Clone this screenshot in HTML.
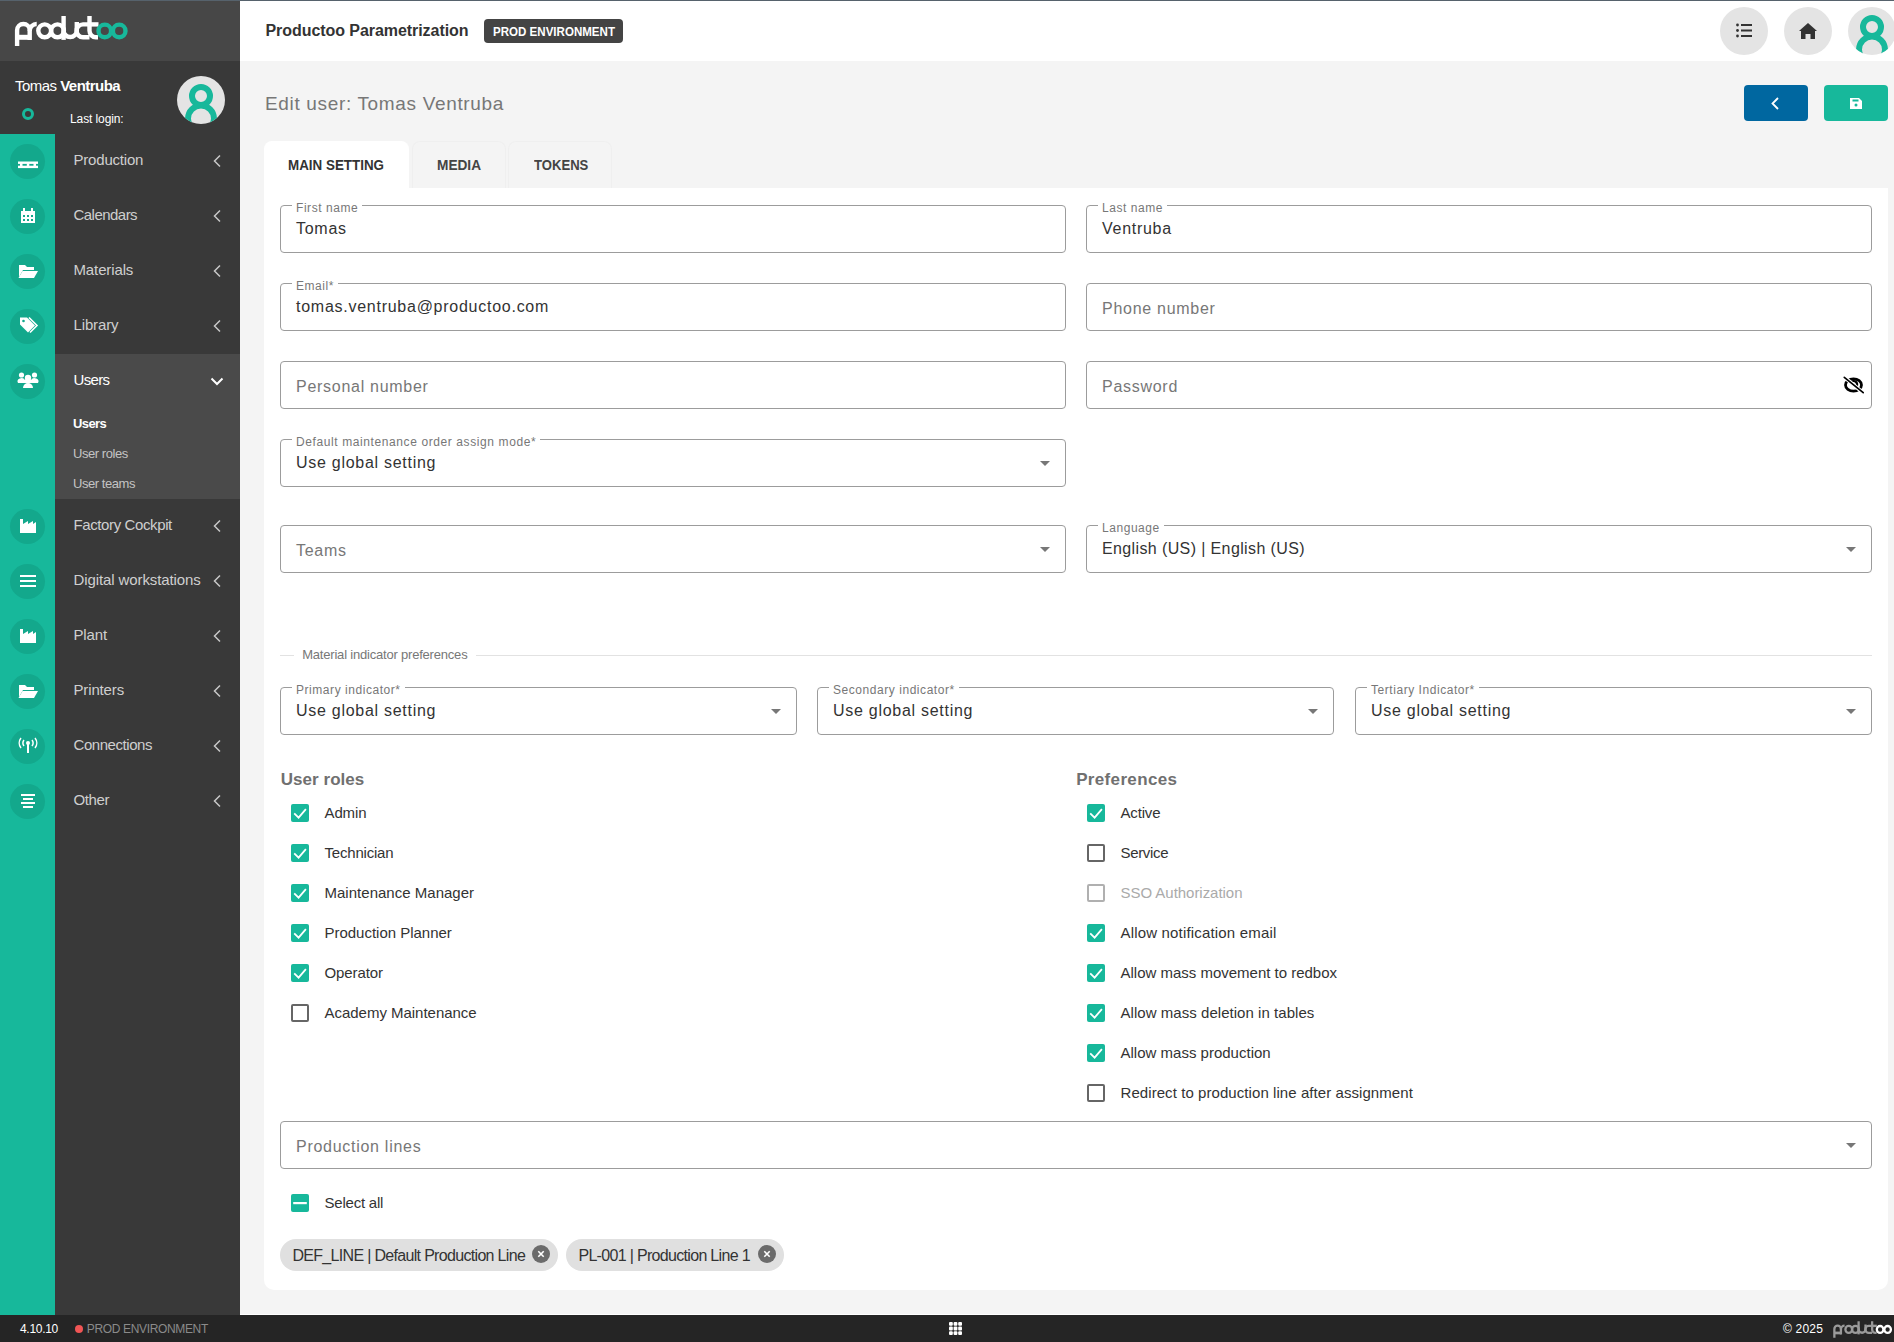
<!DOCTYPE html>
<html><head><meta charset="utf-8">
<style>
*{box-sizing:border-box;margin:0;padding:0}
html,body{width:1894px;height:1342px;overflow:hidden;background:#f4f4f4;font-family:"Liberation Sans",sans-serif;position:relative}
.a{position:absolute}
.t{position:absolute;white-space:nowrap;line-height:1}
svg{position:absolute;overflow:visible}
</style></head><body>
<div class="a" style="left:0;top:0;width:1894px;height:1px;background:#56626c"></div>
<div class="a" style="left:0;top:1px;width:240px;height:60px;background:#474747"></div>
<div class="a" style="left:0;top:61px;width:240px;height:1254px;background:#393939"></div>
<div class="a" style="left:0;top:134px;width:55px;height:1181px;background:#17b89b"></div>
<div class="a" style="left:55px;top:354px;width:185px;height:145px;background:#4a4a4a"></div>
<div class="a" style="left:240px;top:1px;width:1654px;height:60px;background:#fff"></div>
<div class="a" style="left:240px;top:1314px;width:1654px;height:1px;background:#fff"></div>
<div class="a" style="left:0;top:1315px;width:1894px;height:27px;background:#252525"></div>
<svg style="left:0;top:0" width="140" height="60" viewBox="0 0 140 60">
<g fill="none" stroke="#fff" stroke-width="4.4"><path d="M17.1 46 V30.3 A6.3 6.3 0 0 1 29.7 30.3 V39.9"/>
<path d="M17.1 37.3 H29.7" stroke-width="5"/>
<path d="M29.7 31 A7 7 0 0 1 36.7 24"/>
<circle cx="44.7" cy="30.8" r="6.4"/>
<circle cx="57.5" cy="30.8" r="6.4"/>
<path d="M63.6 16 V39.9"/>
<path d="M63.6 30.45 A6.6 6.6 0 0 0 76.8 30.45 V22"/>
<path d="M89.5 24.4 H83 A6.4 6.4 0 0 0 83 37.2 H89.5"/>
<path d="M89.5 16 V30.8 A6.4 6.4 0 0 0 95.9 37.2 H98"/>
<path d="M89.5 24.4 H98.5"/></g>
<g fill="none" stroke="#17b89b" stroke-width="4.4"><circle cx="104.8" cy="30.9" r="6.3"/>
<circle cx="119.2" cy="30.9" r="6.3"/></g></svg>
<div class="t" style="left:15px;top:78px;font-size:15px;color:#fff;letter-spacing:-0.53px">Tomas <b>Ventruba</b></div>
<div class="t" style="left:70px;top:113.00px;font-size:12px;color:#fff;font-weight:400;letter-spacing:-0.1px;">Last login:</div>
<div class="a" style="left:22px;top:108px;width:12px;height:12px;border-radius:50%;border:3.2px solid #17b89b"></div>
<svg style="left:177px;top:76px" width="48" height="48" viewBox="0 0 48 48">
<defs><clipPath id="cp177"><circle cx="24" cy="24" r="24"/></clipPath></defs>
<circle cx="24" cy="24" r="24" fill="#e4e4e4"/>
<g clip-path="url(#cp177)" fill="none" stroke="#17b89b">
<circle cx="24" cy="20" r="9" stroke-width="6"/>
<circle cx="24" cy="42.5" r="13" stroke-width="6"/>
</g></svg>
<div class="a" style="left:10px;top:143.5px;width:35px;height:35px;border-radius:50%;background:#13a88c"></div>
<svg style="left:27.5px;top:161px" width="1" height="1"><g transform="translate(0,1.5)"><rect x="-10" y="-1" width="20" height="2.4" fill="#fff"/><rect x="-10" y="3.2" width="20" height="2.4" fill="#fff"/><rect x="-8" y="0" width="2.5" height="4" fill="#fff"/><rect x="-1.2" y="0" width="2.5" height="4" fill="#fff"/><rect x="5.5" y="0" width="2.5" height="4" fill="#fff"/></g></svg>
<div class="t" style="left:73.5px;top:152.00px;font-size:15px;color:#cfcfcf;font-weight:400;letter-spacing:-0.2px;">Production</div>
<svg style="left:0;top:0" width="1" height="1"><path d="M220 155.5 L214.5 161 L220 166.5" fill="none" stroke="#c8c8c8" stroke-width="1.5"/></svg>
<div class="a" style="left:10px;top:198.5px;width:35px;height:35px;border-radius:50%;background:#13a88c"></div>
<svg style="left:27.5px;top:216px" width="1" height="1"><rect x="-7" y="-5" width="14" height="12" fill="#fff"/><rect x="-5" y="-8" width="2" height="4" fill="#fff"/><rect x="3" y="-8" width="2" height="4" fill="#fff"/><g fill="#13a88c"><rect x="-5" y="-1" width="2" height="2"/><rect x="-1" y="-1" width="2" height="2"/><rect x="3" y="-1" width="2" height="2"/><rect x="-5" y="3" width="2" height="2"/><rect x="-1" y="3" width="2" height="2"/><rect x="3" y="3" width="2" height="2"/></g></svg>
<div class="t" style="left:73.5px;top:207.00px;font-size:15px;color:#cfcfcf;font-weight:400;letter-spacing:-0.533px;">Calendars</div>
<svg style="left:0;top:0" width="1" height="1"><path d="M220 210.5 L214.5 216 L220 221.5" fill="none" stroke="#c8c8c8" stroke-width="1.5"/></svg>
<div class="a" style="left:10px;top:253.5px;width:35px;height:35px;border-radius:50%;background:#13a88c"></div>
<svg style="left:27.5px;top:271px" width="1" height="1"><path d="M-9 -6 H-3 L-1 -4 H6 V-1 H-5 L-9 6 Z" fill="#fff"/><path d="M-5.5 0 H10 L6 7 H-9.5 Z" fill="#fff"/></svg>
<div class="t" style="left:73.5px;top:262.00px;font-size:15px;color:#cfcfcf;font-weight:400;letter-spacing:-0.122px;">Materials</div>
<svg style="left:0;top:0" width="1" height="1"><path d="M220 265.5 L214.5 271 L220 276.5" fill="none" stroke="#c8c8c8" stroke-width="1.5"/></svg>
<div class="a" style="left:10px;top:308.5px;width:35px;height:35px;border-radius:50%;background:#13a88c"></div>
<svg style="left:27.5px;top:326px" width="1" height="1"><g transform="translate(0,-1.5)"><path d="M-8 -7 H-1 L7 1 L0 8 L-8 0 Z" fill="#fff"/><circle cx="-4.5" cy="-3.5" r="1.3" fill="#13a88c"/><path d="M1 -7 L9 1 L2 8" fill="none" stroke="#fff" stroke-width="1.6"/></g></svg>
<div class="t" style="left:73.5px;top:317.00px;font-size:15px;color:#cfcfcf;font-weight:400;letter-spacing:-0.143px;">Library</div>
<svg style="left:0;top:0" width="1" height="1"><path d="M220 320.5 L214.5 326 L220 331.5" fill="none" stroke="#c8c8c8" stroke-width="1.5"/></svg>
<div class="a" style="left:10px;top:363.5px;width:35px;height:35px;border-radius:50%;background:#13a88c"></div>
<svg style="left:27.5px;top:381px" width="1" height="1"><circle cx="-6.5" cy="-6" r="2.6" fill="#fff"/><circle cx="6.5" cy="-6" r="2.6" fill="#fff"/><circle cx="0" cy="-3" r="3.2" fill="#fff"/><path d="M-10 2 a3.5 3 0 0 1 7 -3 H3 a3.5 3 0 0 1 7 3 Z" fill="#fff"/><path d="M-5 7 a5 5 0 0 1 10 0 Z" fill="#fff"/></svg>
<div class="t" style="left:73.5px;top:372.00px;font-size:15px;color:#fff;font-weight:400;letter-spacing:-0.64px;">Users</div>
<svg style="left:0;top:0" width="1" height="1"><path d="M211.5 378.5 L217 384 L222.5 378.5" fill="none" stroke="#fff" stroke-width="2"/></svg>
<div class="a" style="left:10px;top:508.5px;width:35px;height:35px;border-radius:50%;background:#13a88c"></div>
<svg style="left:27.5px;top:526px" width="1" height="1"><path d="M-8 -7 H-5 V-2 L0 -5 V-2 L5 -5 V-2 L8 -4 V7 H-8 Z" fill="#fff"/></svg>
<div class="t" style="left:73.5px;top:517.00px;font-size:15px;color:#cfcfcf;font-weight:400;letter-spacing:-0.387px;">Factory Cockpit</div>
<svg style="left:0;top:0" width="1" height="1"><path d="M220 520.5 L214.5 526 L220 531.5" fill="none" stroke="#c8c8c8" stroke-width="1.5"/></svg>
<div class="a" style="left:10px;top:563.5px;width:35px;height:35px;border-radius:50%;background:#13a88c"></div>
<svg style="left:27.5px;top:581px" width="1" height="1"><rect x="-8" y="-6" width="16" height="2" fill="#fff"/><rect x="-8" y="-1" width="16" height="2" fill="#fff"/><rect x="-8" y="4" width="16" height="2" fill="#fff"/></svg>
<div class="t" style="left:73.5px;top:572.00px;font-size:15px;color:#cfcfcf;font-weight:400;letter-spacing:-0.1px;">Digital workstations</div>
<svg style="left:0;top:0" width="1" height="1"><path d="M220 575.5 L214.5 581 L220 586.5" fill="none" stroke="#c8c8c8" stroke-width="1.5"/></svg>
<div class="a" style="left:10px;top:618.5px;width:35px;height:35px;border-radius:50%;background:#13a88c"></div>
<svg style="left:27.5px;top:636px" width="1" height="1"><path d="M-8 -7 H-5 V-2 L0 -5 V-2 L5 -5 V-2 L8 -4 V7 H-8 Z" fill="#fff"/></svg>
<div class="t" style="left:73.5px;top:627.00px;font-size:15px;color:#cfcfcf;font-weight:400;letter-spacing:-0.16px;">Plant</div>
<svg style="left:0;top:0" width="1" height="1"><path d="M220 630.5 L214.5 636 L220 641.5" fill="none" stroke="#c8c8c8" stroke-width="1.5"/></svg>
<div class="a" style="left:10px;top:673.5px;width:35px;height:35px;border-radius:50%;background:#13a88c"></div>
<svg style="left:27.5px;top:691px" width="1" height="1"><path d="M-9 -6 H-3 L-1 -4 H6 V-1 H-5 L-9 6 Z" fill="#fff"/><path d="M-5.5 0 H10 L6 7 H-9.5 Z" fill="#fff"/></svg>
<div class="t" style="left:73.5px;top:682.00px;font-size:15px;color:#cfcfcf;font-weight:400;letter-spacing:-0.15px;">Printers</div>
<svg style="left:0;top:0" width="1" height="1"><path d="M220 685.5 L214.5 691 L220 696.5" fill="none" stroke="#c8c8c8" stroke-width="1.5"/></svg>
<div class="a" style="left:10px;top:728.5px;width:35px;height:35px;border-radius:50%;background:#13a88c"></div>
<svg style="left:27.5px;top:746px" width="1" height="1"><rect x="-1" y="-3" width="2" height="10" fill="#fff"/><circle cx="0" cy="-3" r="2" fill="#fff"/><path d="M-4 -6 a5 5 0 0 0 0 6 M4 -6 a5 5 0 0 1 0 6 M-7 -8 a8 8 0 0 0 0 10 M7 -8 a8 8 0 0 1 0 10" fill="none" stroke="#fff" stroke-width="1.5"/></svg>
<div class="t" style="left:73.5px;top:737.00px;font-size:15px;color:#cfcfcf;font-weight:400;letter-spacing:-0.436px;">Connections</div>
<svg style="left:0;top:0" width="1" height="1"><path d="M220 740.5 L214.5 746 L220 751.5" fill="none" stroke="#c8c8c8" stroke-width="1.5"/></svg>
<div class="a" style="left:10px;top:783.5px;width:35px;height:35px;border-radius:50%;background:#13a88c"></div>
<svg style="left:27.5px;top:801px" width="1" height="1"><rect x="-7" y="-7" width="14" height="2" fill="#fff"/><rect x="-5" y="-3" width="10" height="2" fill="#fff"/><rect x="-7" y="1" width="14" height="2" fill="#fff"/><rect x="-5" y="5" width="10" height="2" fill="#fff"/></svg>
<div class="t" style="left:73.5px;top:792.00px;font-size:15px;color:#cfcfcf;font-weight:400;letter-spacing:-0.36px;">Other</div>
<svg style="left:0;top:0" width="1" height="1"><path d="M220 795.5 L214.5 801 L220 806.5" fill="none" stroke="#c8c8c8" stroke-width="1.5"/></svg>
<div class="t" style="left:73px;top:417.00px;font-size:13px;color:#fff;font-weight:700;letter-spacing:-0.6px;">Users</div>
<div class="t" style="left:73px;top:447.00px;font-size:13px;color:#c4c4c4;font-weight:400;letter-spacing:-0.44px;">User roles</div>
<div class="t" style="left:73px;top:477.00px;font-size:13px;color:#c4c4c4;font-weight:400;letter-spacing:-0.44px;">User teams</div>
<div class="t" style="left:265.5px;top:23.00px;font-size:16px;color:#333;font-weight:700;letter-spacing:-0.06px;">Productoo Parametrization</div>
<div class="a" style="left:484px;top:19px;width:139px;height:24px;border-radius:4px;background:#444"></div>
<div class="t" style="left:492.6px;top:26.00px;font-size:12px;color:#fff;font-weight:700;letter-spacing:0px;transform:scaleX(0.963);transform-origin:0 0">PROD ENVIRONMENT</div>
<div class="a" style="left:1720px;top:7px;width:48px;height:48px;border-radius:50%;background:#e4e4e4"></div>
<div class="a" style="left:1784px;top:7px;width:48px;height:48px;border-radius:50%;background:#e4e4e4"></div>
<svg style="left:0;top:0" width="1" height="1"><g fill="#333">
<circle cx="1737.5" cy="25" r="1.4"/><circle cx="1737.5" cy="30.5" r="1.4"/><circle cx="1737.5" cy="36" r="1.4"/>
<rect x="1741" y="24" width="11" height="2"/><rect x="1741" y="29.5" width="11" height="2"/><rect x="1741" y="35" width="11" height="2"/>
<path d="M1799 31 L1808 23 L1817 31 L1815 31 V39 H1810.5 V34 H1805.5 V39 H1801 V31 Z"/>
</g></svg>
<svg style="left:1848px;top:7px" width="48" height="48" viewBox="0 0 48 48">
<defs><clipPath id="cp1848"><circle cx="24" cy="24" r="24"/></clipPath></defs>
<circle cx="24" cy="24" r="24" fill="#e4e4e4"/>
<g clip-path="url(#cp1848)" fill="none" stroke="#17b89b">
<circle cx="24" cy="20" r="9" stroke-width="6"/>
<circle cx="24" cy="42.5" r="13" stroke-width="6"/>
</g></svg>
<div class="t" style="left:265px;top:94.00px;font-size:19px;color:#777;font-weight:400;letter-spacing:0.66px;">Edit user: Tomas Ventruba</div>
<div class="a" style="left:1744px;top:85px;width:64px;height:36px;border-radius:4px;background:#0067a0"></div>
<div class="a" style="left:1824px;top:85px;width:64px;height:36px;border-radius:4px;background:#17b89b"></div>
<svg style="left:0;top:0" width="1" height="1">
<path d="M1778 98 L1772.5 103.5 L1778 109" fill="none" stroke="#fff" stroke-width="1.8"/>
<path d="M1850 98 H1859 L1862 101 V109 H1850 Z" fill="#fff"/>
<rect x="1852.5" y="99.5" width="6" height="2" fill="#17b89b"/>
<circle cx="1856" cy="105" r="1.5" fill="#17b89b"/>
</svg>
<div class="a" style="left:264px;top:141px;width:145px;height:48px;border-radius:8px 8px 0 0;background:#fff"></div>
<div class="a" style="left:412px;top:141px;width:94px;height:47px;border-radius:8px 8px 0 0;border:1px solid #efefef;border-bottom:none"></div>
<div class="a" style="left:508px;top:141px;width:104px;height:47px;border-radius:8px 8px 0 0;border:1px solid #efefef;border-bottom:none"></div>
<div class="t" style="left:288.4px;top:157.00px;font-size:15px;color:#333;font-weight:700;letter-spacing:0px;transform:scaleX(0.893);transform-origin:0 0">MAIN SETTING</div>
<div class="t" style="left:436.9px;top:157.00px;font-size:15px;color:#444;font-weight:700;letter-spacing:0px;transform:scaleX(0.911);transform-origin:0 0">MEDIA</div>
<div class="t" style="left:533.6px;top:157.00px;font-size:15px;color:#444;font-weight:700;letter-spacing:0px;transform:scaleX(0.873);transform-origin:0 0">TOKENS</div>
<div class="a" style="left:264px;top:188px;width:1624px;height:1102px;background:#fff;border-radius:0 0 10px 10px"></div>
<div class="a" style="left:280px;top:205px;width:786px;height:48px;border:1px solid #9c9c9c;border-radius:4px;background:#fff"></div>
<div class="t" style="left:292px;top:202px;padding:0 4px;background:#fff;font-size:12px;line-height:12px;color:#777;letter-spacing:0.55px">First name</div>
<div class="t" style="left:296px;top:221.00px;font-size:16px;color:#333;font-weight:400;letter-spacing:0.72px;">Tomas</div>
<div class="a" style="left:1086px;top:205px;width:786px;height:48px;border:1px solid #9c9c9c;border-radius:4px;background:#fff"></div>
<div class="t" style="left:1098px;top:202px;padding:0 4px;background:#fff;font-size:12px;line-height:12px;color:#777;letter-spacing:0.55px">Last name</div>
<div class="t" style="left:1102px;top:221.00px;font-size:16px;color:#333;font-weight:400;letter-spacing:0.72px;">Ventruba</div>
<div class="a" style="left:280px;top:283px;width:786px;height:48px;border:1px solid #9c9c9c;border-radius:4px;background:#fff"></div>
<div class="t" style="left:292px;top:280px;padding:0 4px;background:#fff;font-size:12px;line-height:12px;color:#777;letter-spacing:0.55px">Email*</div>
<div class="t" style="left:296px;top:299.00px;font-size:16px;color:#333;font-weight:400;letter-spacing:0.74px;">tomas.ventruba@productoo.com</div>
<div class="a" style="left:1086px;top:283px;width:786px;height:48px;border:1px solid #9c9c9c;border-radius:4px;background:#fff"></div>
<div class="t" style="left:1102px;top:301.00px;font-size:16px;color:#777;font-weight:400;letter-spacing:0.72px;">Phone number</div>
<div class="a" style="left:280px;top:361px;width:786px;height:48px;border:1px solid #9c9c9c;border-radius:4px;background:#fff"></div>
<div class="t" style="left:296px;top:379.00px;font-size:16px;color:#777;font-weight:400;letter-spacing:0.72px;">Personal number</div>
<div class="a" style="left:1086px;top:361px;width:786px;height:48px;border:1px solid #9c9c9c;border-radius:4px;background:#fff"></div>
<div class="t" style="left:1102px;top:379.00px;font-size:16px;color:#777;font-weight:400;letter-spacing:0.72px;">Password</div>
<div class="a" style="left:280px;top:439px;width:786px;height:48px;border:1px solid #9c9c9c;border-radius:4px;background:#fff"></div>
<div class="t" style="left:292px;top:436px;padding:0 4px;background:#fff;font-size:12px;line-height:12px;color:#777;letter-spacing:0.6px">Default maintenance order assign mode*</div>
<div class="t" style="left:296px;top:455.00px;font-size:16px;color:#333;font-weight:400;letter-spacing:0.72px;">Use global setting</div>
<svg style="left:0;top:0" width="1" height="1"><path d="M1040 461 h10 l-5 5 z" fill="#777"/></svg>
<div class="a" style="left:280px;top:525px;width:786px;height:48px;border:1px solid #9c9c9c;border-radius:4px;background:#fff"></div>
<div class="t" style="left:296px;top:543.00px;font-size:16px;color:#777;font-weight:400;letter-spacing:0.72px;">Teams</div>
<svg style="left:0;top:0" width="1" height="1"><path d="M1040 547 h10 l-5 5 z" fill="#777"/></svg>
<div class="a" style="left:1086px;top:525px;width:786px;height:48px;border:1px solid #9c9c9c;border-radius:4px;background:#fff"></div>
<div class="t" style="left:1098px;top:522px;padding:0 4px;background:#fff;font-size:12px;line-height:12px;color:#777;letter-spacing:0.55px">Language</div>
<div class="t" style="left:1102px;top:541.00px;font-size:16px;color:#333;font-weight:400;letter-spacing:0.38px;">English (US) | English (US)</div>
<svg style="left:0;top:0" width="1" height="1"><path d="M1846 547 h10 l-5 5 z" fill="#777"/></svg>
<svg style="left:0;top:0" width="1" height="1">
<ellipse cx="1853.5" cy="385" rx="8" ry="6.2" fill="none" stroke="#000" stroke-width="2.8"/>
<path d="M1851 382.5 A3.2 3.2 0 0 1 1856.5 386.5" fill="none" stroke="#000" stroke-width="2.2"/>
<path d="M1843.5 376.5 L1864 393.5" stroke="#fff" stroke-width="3.6"/>
<path d="M1844.3 377.4 L1863.2 392.6" stroke="#000" stroke-width="1.7" stroke-linecap="round"/>
</svg>
<div class="a" style="left:280px;top:655px;width:14px;height:1px;background:#e2e2e2"></div>
<div class="a" style="left:476px;top:655px;width:1396px;height:1px;background:#e2e2e2"></div>
<div class="t" style="left:302.2px;top:648.00px;font-size:13px;color:#777;font-weight:400;letter-spacing:-0.2px;">Material indicator preferences</div>
<div class="a" style="left:280px;top:687px;width:517px;height:48px;border:1px solid #9c9c9c;border-radius:4px;background:#fff"></div>
<div class="t" style="left:292px;top:684px;padding:0 4px;background:#fff;font-size:12px;line-height:12px;color:#777;letter-spacing:0.55px">Primary indicator*</div>
<div class="t" style="left:296px;top:703.00px;font-size:16px;color:#333;font-weight:400;letter-spacing:0.72px;">Use global setting</div>
<svg style="left:0;top:0" width="1" height="1"><path d="M771 709 h10 l-5 5 z" fill="#777"/></svg>
<div class="a" style="left:817px;top:687px;width:517px;height:48px;border:1px solid #9c9c9c;border-radius:4px;background:#fff"></div>
<div class="t" style="left:829px;top:684px;padding:0 4px;background:#fff;font-size:12px;line-height:12px;color:#777;letter-spacing:0.55px">Secondary indicator*</div>
<div class="t" style="left:833px;top:703.00px;font-size:16px;color:#333;font-weight:400;letter-spacing:0.72px;">Use global setting</div>
<svg style="left:0;top:0" width="1" height="1"><path d="M1308 709 h10 l-5 5 z" fill="#777"/></svg>
<div class="a" style="left:1355px;top:687px;width:517px;height:48px;border:1px solid #9c9c9c;border-radius:4px;background:#fff"></div>
<div class="t" style="left:1367px;top:684px;padding:0 4px;background:#fff;font-size:12px;line-height:12px;color:#777;letter-spacing:0.55px">Tertiary Indicator*</div>
<div class="t" style="left:1371px;top:703.00px;font-size:16px;color:#333;font-weight:400;letter-spacing:0.72px;">Use global setting</div>
<svg style="left:0;top:0" width="1" height="1"><path d="M1846 709 h10 l-5 5 z" fill="#777"/></svg>
<div class="t" style="left:280.7px;top:771.00px;font-size:17px;color:#707070;font-weight:700;letter-spacing:0.05px;">User roles</div>
<div class="t" style="left:1076.2px;top:771.00px;font-size:17px;color:#707070;font-weight:700;letter-spacing:0.34px;">Preferences</div>
<svg style="left:291px;top:804px" width="18" height="18"><rect x="0" y="0" width="18" height="18" rx="2" fill="#17b89b"/><path d="M3.2 9.4 L7.6 13.6 L14.9 5.2" fill="none" stroke="#fff" stroke-width="1.8"/></svg>
<div class="t" style="left:324.5px;top:805.00px;font-size:15px;color:#333;font-weight:400;letter-spacing:-0.113px;">Admin</div>
<svg style="left:291px;top:844px" width="18" height="18"><rect x="0" y="0" width="18" height="18" rx="2" fill="#17b89b"/><path d="M3.2 9.4 L7.6 13.6 L14.9 5.2" fill="none" stroke="#fff" stroke-width="1.8"/></svg>
<div class="t" style="left:324.5px;top:845.00px;font-size:15px;color:#333;font-weight:400;letter-spacing:-0.197px;">Technician</div>
<svg style="left:291px;top:884px" width="18" height="18"><rect x="0" y="0" width="18" height="18" rx="2" fill="#17b89b"/><path d="M3.2 9.4 L7.6 13.6 L14.9 5.2" fill="none" stroke="#fff" stroke-width="1.8"/></svg>
<div class="t" style="left:324.5px;top:885.00px;font-size:15px;color:#333;font-weight:400;letter-spacing:0.018px;">Maintenance Manager</div>
<svg style="left:291px;top:924px" width="18" height="18"><rect x="0" y="0" width="18" height="18" rx="2" fill="#17b89b"/><path d="M3.2 9.4 L7.6 13.6 L14.9 5.2" fill="none" stroke="#fff" stroke-width="1.8"/></svg>
<div class="t" style="left:324.5px;top:925.00px;font-size:15px;color:#333;font-weight:400;letter-spacing:-0.016px;">Production Planner</div>
<svg style="left:291px;top:964px" width="18" height="18"><rect x="0" y="0" width="18" height="18" rx="2" fill="#17b89b"/><path d="M3.2 9.4 L7.6 13.6 L14.9 5.2" fill="none" stroke="#fff" stroke-width="1.8"/></svg>
<div class="t" style="left:324.5px;top:965.00px;font-size:15px;color:#333;font-weight:400;letter-spacing:-0.107px;">Operator</div>
<div class="a" style="left:291px;top:1004px;width:18px;height:18px;border-radius:2px;border:2px solid #666"></div>
<div class="t" style="left:324.5px;top:1005.00px;font-size:15px;color:#333;font-weight:400;letter-spacing:-0.022px;">Academy Maintenance</div>
<svg style="left:1087px;top:804px" width="18" height="18"><rect x="0" y="0" width="18" height="18" rx="2" fill="#17b89b"/><path d="M3.2 9.4 L7.6 13.6 L14.9 5.2" fill="none" stroke="#fff" stroke-width="1.8"/></svg>
<div class="t" style="left:1120.5px;top:805.00px;font-size:15px;color:#333;font-weight:400;letter-spacing:-0.163px;">Active</div>
<div class="a" style="left:1087px;top:844px;width:18px;height:18px;border-radius:2px;border:2px solid #666"></div>
<div class="t" style="left:1120.5px;top:845.00px;font-size:15px;color:#333;font-weight:400;letter-spacing:-0.337px;">Service</div>
<div class="a" style="left:1087px;top:884px;width:18px;height:18px;border-radius:2px;border:2px solid #b0b0b0"></div>
<div class="t" style="left:1120.5px;top:885.00px;font-size:15px;color:#aaa;font-weight:400;letter-spacing:-0.037px;">SSO Authorization</div>
<svg style="left:1087px;top:924px" width="18" height="18"><rect x="0" y="0" width="18" height="18" rx="2" fill="#17b89b"/><path d="M3.2 9.4 L7.6 13.6 L14.9 5.2" fill="none" stroke="#fff" stroke-width="1.8"/></svg>
<div class="t" style="left:1120.5px;top:925.00px;font-size:15px;color:#333;font-weight:400;letter-spacing:0.176px;">Allow notification email</div>
<svg style="left:1087px;top:964px" width="18" height="18"><rect x="0" y="0" width="18" height="18" rx="2" fill="#17b89b"/><path d="M3.2 9.4 L7.6 13.6 L14.9 5.2" fill="none" stroke="#fff" stroke-width="1.8"/></svg>
<div class="t" style="left:1120.5px;top:965.00px;font-size:15px;color:#333;font-weight:400;letter-spacing:-0.009px;">Allow mass movement to redbox</div>
<svg style="left:1087px;top:1004px" width="18" height="18"><rect x="0" y="0" width="18" height="18" rx="2" fill="#17b89b"/><path d="M3.2 9.4 L7.6 13.6 L14.9 5.2" fill="none" stroke="#fff" stroke-width="1.8"/></svg>
<div class="t" style="left:1120.5px;top:1005.00px;font-size:15px;color:#333;font-weight:400;letter-spacing:0.043px;">Allow mass deletion in tables</div>
<svg style="left:1087px;top:1044px" width="18" height="18"><rect x="0" y="0" width="18" height="18" rx="2" fill="#17b89b"/><path d="M3.2 9.4 L7.6 13.6 L14.9 5.2" fill="none" stroke="#fff" stroke-width="1.8"/></svg>
<div class="t" style="left:1120.5px;top:1045.00px;font-size:15px;color:#333;font-weight:400;letter-spacing:0.005px;">Allow mass production</div>
<div class="a" style="left:1087px;top:1084px;width:18px;height:18px;border-radius:2px;border:2px solid #666"></div>
<div class="t" style="left:1120.5px;top:1085.00px;font-size:15px;color:#333;font-weight:400;letter-spacing:0.07px;">Redirect to production line after assignment</div>
<div class="a" style="left:280px;top:1121px;width:1592px;height:48px;border:1px solid #9c9c9c;border-radius:4px;background:#fff"></div>
<div class="t" style="left:296px;top:1139.00px;font-size:16px;color:#777;font-weight:400;letter-spacing:0.72px;">Production lines</div>
<svg style="left:0;top:0" width="1" height="1"><path d="M1846 1143 h10 l-5 5 z" fill="#777"/></svg>
<svg style="left:291px;top:1194px" width="18" height="18"><rect x="0" y="0" width="18" height="18" rx="2" fill="#17b89b"/><rect x="2.2" y="8" width="13.6" height="2.2" fill="#fff"/></svg>
<div class="t" style="left:324.5px;top:1195.00px;font-size:15px;color:#333;font-weight:400;letter-spacing:-0.214px;">Select all</div>
<div class="a" style="left:280px;top:1239px;width:278px;height:32px;border-radius:16px;background:#e0e0e0"></div>
<div class="t" style="left:292.4px;top:1247.50px;font-size:16px;color:#333;font-weight:400;letter-spacing:-0.68px;">DEF_LINE | Default Production Line</div>
<svg style="left:531.8px;top:1245.4px" width="18" height="18"><circle cx="9" cy="9" r="9" fill="#6b6b6b"/><path d="M6.3 6.3 L11.7 11.7 M11.7 6.3 L6.3 11.7" stroke="#fff" stroke-width="1.6"/></svg>
<div class="a" style="left:566px;top:1239px;width:218px;height:32px;border-radius:16px;background:#e0e0e0"></div>
<div class="t" style="left:578.4px;top:1247.50px;font-size:16px;color:#333;font-weight:400;letter-spacing:-0.68px;">PL-001 | Production Line 1</div>
<svg style="left:758.2px;top:1245.4px" width="18" height="18"><circle cx="9" cy="9" r="9" fill="#6b6b6b"/><path d="M6.3 6.3 L11.7 11.7 M11.7 6.3 L6.3 11.7" stroke="#fff" stroke-width="1.6"/></svg>
<div class="t" style="left:20px;top:1323.00px;font-size:12px;color:#fff;font-weight:400;letter-spacing:-0.3px;">4.10.10</div>
<div class="a" style="left:74.5px;top:1325px;width:8px;height:8px;border-radius:50%;background:#f05555"></div>
<div class="t" style="left:86.8px;top:1323.00px;font-size:12px;color:#8a8a8a;font-weight:400;letter-spacing:-0.35px;">PROD ENVIRONMENT</div>
<svg style="left:949px;top:1322px" width="14" height="14"><g fill="#fff"><rect x="0.0" y="0.0" width="3.8" height="3.8" rx="1"/><rect x="0.0" y="4.6" width="3.8" height="3.8" rx="1"/><rect x="0.0" y="9.2" width="3.8" height="3.8" rx="1"/><rect x="4.6" y="0.0" width="3.8" height="3.8" rx="1"/><rect x="4.6" y="4.6" width="3.8" height="3.8" rx="1"/><rect x="4.6" y="9.2" width="3.8" height="3.8" rx="1"/><rect x="9.2" y="0.0" width="3.8" height="3.8" rx="1"/><rect x="9.2" y="4.6" width="3.8" height="3.8" rx="1"/><rect x="9.2" y="9.2" width="3.8" height="3.8" rx="1"/></g></svg>
<div class="t" style="left:1783px;top:1323.00px;font-size:12px;color:#fff;font-weight:400;letter-spacing:0.2px;">&copy; 2025</div>
<svg style="left:1833px;top:1321px" width="60" height="17" viewBox="14.5 15.5 115 31" preserveAspectRatio="none">
<g fill="none" stroke="#9a9a9a" stroke-width="4.4"><path d="M17.1 46 V30.3 A6.3 6.3 0 0 1 29.7 30.3 V39.9"/>
<path d="M17.1 37.3 H29.7" stroke-width="5"/>
<path d="M29.7 31 A7 7 0 0 1 36.7 24"/>
<circle cx="44.7" cy="30.8" r="6.4"/>
<circle cx="57.5" cy="30.8" r="6.4"/>
<path d="M63.6 16 V39.9"/>
<path d="M63.6 30.45 A6.6 6.6 0 0 0 76.8 30.45 V22"/>
<path d="M89.5 24.4 H83 A6.4 6.4 0 0 0 83 37.2 H89.5"/>
<path d="M89.5 16 V30.8 A6.4 6.4 0 0 0 95.9 37.2 H98"/>
<path d="M89.5 24.4 H98.5"/></g><g fill="none" stroke="#fff" stroke-width="4.4"><circle cx="104.8" cy="30.9" r="6.3"/>
<circle cx="119.2" cy="30.9" r="6.3"/></g></svg>
</body></html>
